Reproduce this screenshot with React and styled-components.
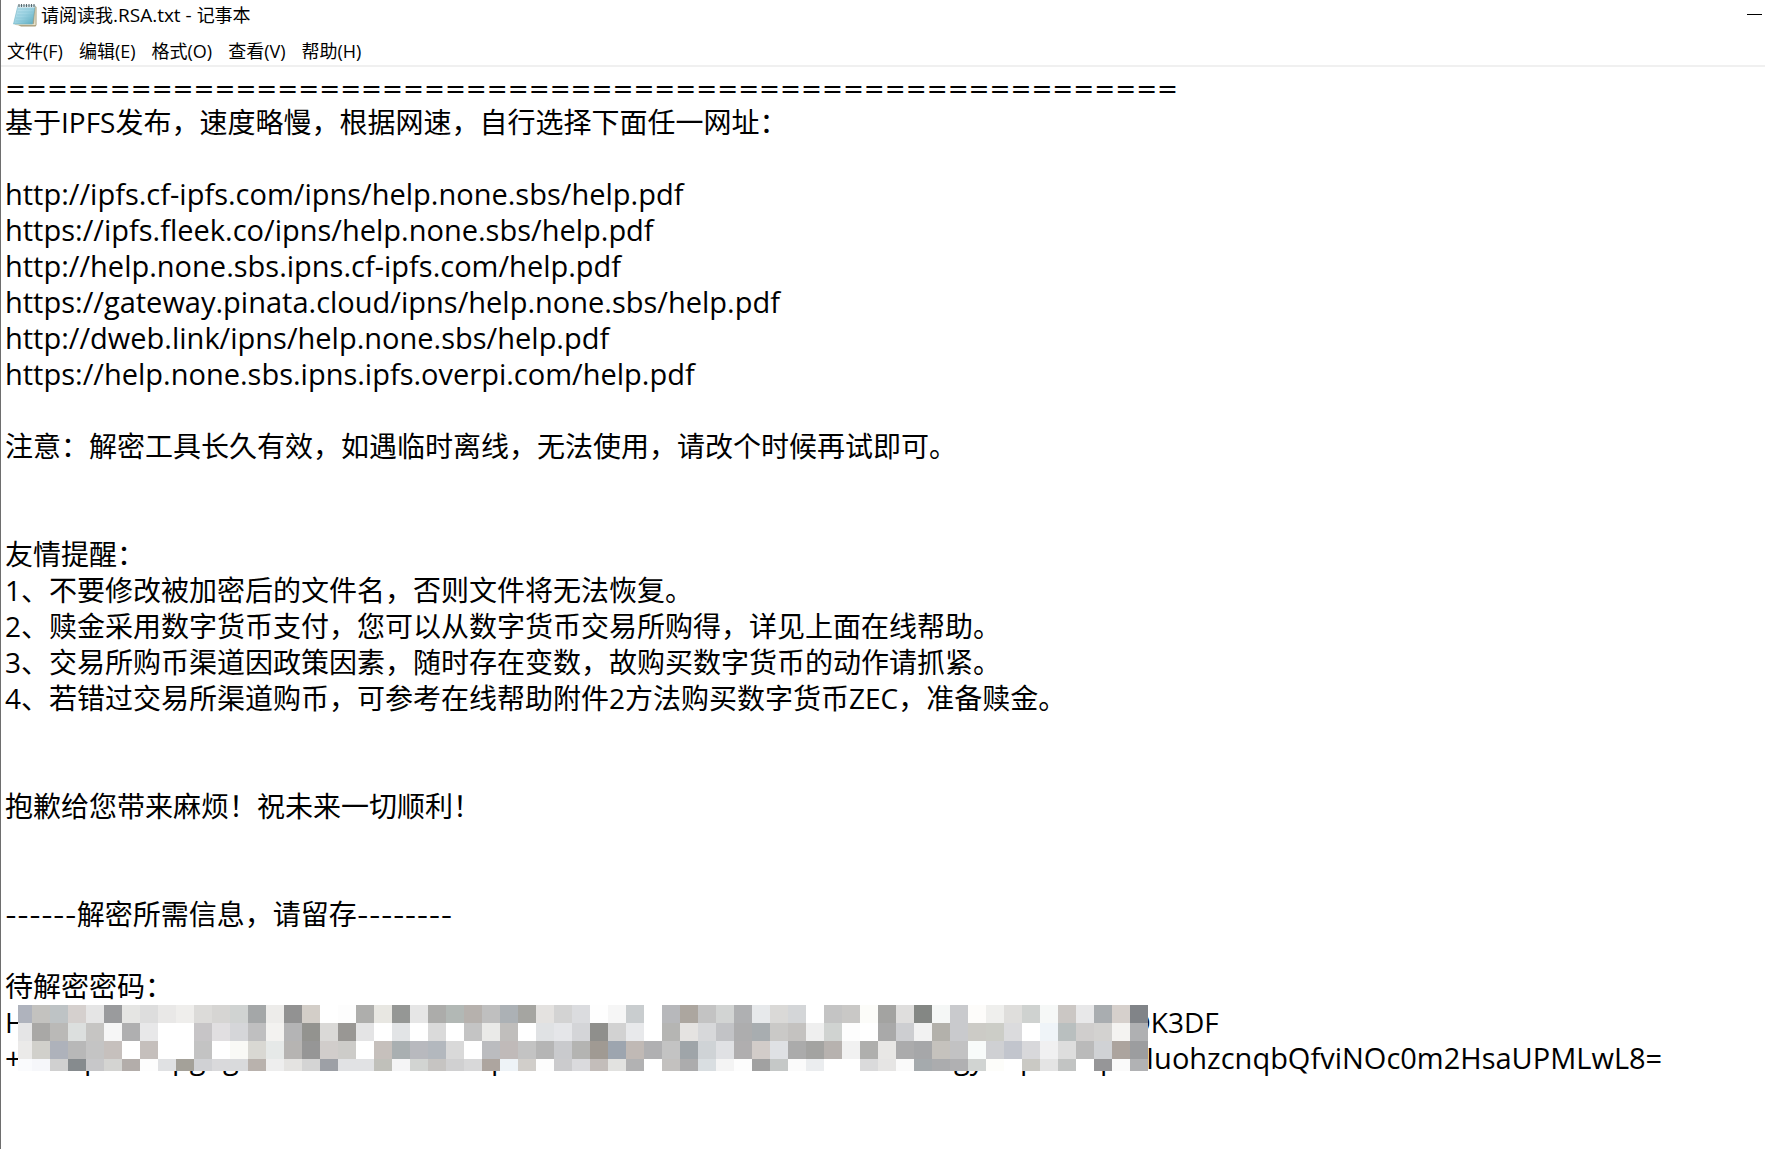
import styled, { createGlobalStyle } from 'styled-components'

const menus = ['文件(F)', '编辑(E)', '格式(O)', '查看(V)', '帮助(H)']

const links = [
  'http://ipfs.cf-ipfs.com/ipns/help.none.sbs/help.pdf',
  'https://ipfs.fleek.co/ipns/help.none.sbs/help.pdf',
  'http://help.none.sbs.ipns.cf-ipfs.com/help.pdf',
  'https://gateway.pinata.cloud/ipns/help.none.sbs/help.pdf',
  'http://dweb.link/ipns/help.none.sbs/help.pdf',
  'https://help.none.sbs.ipns.ipfs.overpi.com/help.pdf',
]

const reminders = [
  '1、不要修改被加密后的文件名，否则文件将无法恢复。',
  '2、赎金采用数字货币支付，您可以从数字货币交易所购得，详见上面在线帮助。',
  '3、交易所购币渠道因政策因素，随时存在变数，故购买数字货币的动作请抓紧。',
  '4、若错过交易所渠道购币，可参考在线帮助附件2方法购买数字货币ZEC，准备赎金。',
]

// one string per row of blocks, one colour per block
const mosaic = [
  'afb3bd c3c2bf bec3c5 d5d0ce e5e5e5 9a9b9d e5e5e3 dddddd e9e8e7 efeeec dcdbd9 d6d5d3 d0d3d2 a4a7a8 edecea 929292 d3cec8 ffffff fdfdfd aeaeac e8e7e2 959795 e6e6e6 acacaa b2b8b5 b6b1ad bfbfbf acb1b5 a5a5a1 e4e2e0 d3d3d3 dbdcdf fefefe f6f6f6 c9cdcf ffffff b7b8bb aca69f c3c3c3 d2d4d3 afb0b2 e7e9eb dad9d7 d4d6d8 ffffff c4c4c4 c9c8c6 fcfcf9 a3a3a1 dfdedd 848784 f5f7f6 c9cacd fdfcfa efefed dfdedc cfd2d0 f6f8f7 cbc7c4 e8e8e9 a9adb0 d6d0cc 818488',
  'e5e5e6 a9a8a6 bab9b7 dcdfde c6c5c3 f6f6f6 afafb0 e8e8e9 ffffff ffffff c7c5c7 e1dfe1 d5d6d9 bfbfc0 f3f2f0 b4b4b5 93938f dad9d7 999794 e4e4e5 ffffff e2e4e6 ffffff dadada ffffff c4c4c4 eaeae8 c0bebc ffffff e0e2e4 e5e6e9 d4d5d8 8f8f8c d2d2d2 e8e9eb ffffff b5b5b3 e5e3e1 d7d8da c2c3c6 adadae a8adb0 cac9c7 c4c2c0 efefef d0d3d1 fdfdfd ffffff a9a9a9 cdced1 f2f2f2 b3b1ab c9cacd cccbc6 cccdc7 dbdbdd ffffff eff4f8 b9bfbf d0cecd d3d2d0 f4f3f1 afb0b2',
  'ebeae9 d1d0cb aeb2bb b8b8b8 c4c4c4 c6c0bd ffffff c5bfbc ffffff ffffff c3c3c3 ffffff f9f9f6 d9d8d3 e6e9e8 b6b4b2 969696 d1cdcb cdccc9 ffffff c6c0bc a9afb1 b8b9be b3b8be d9d9d9 ffffff bbbcbf c0bab9 c3c3c3 b5b5b5 c9cacd b4b4b2 a09a93 9da5af c0b9b5 b0b0b2 c3c3c3 9fa5a9 cfd3d6 e0e1e4 b0aeaf d2ccc9 dfe1e4 ababab a3a3a1 b7b2af f1f1f1 afafad e8e7e5 ababac a6a7a9 c5c2bd c2c2c3 f8fbfa cfd0d3 c2c5cd d8d8db f0f0f1 dddddd bababa d0d2d5 aca49e 9c9d9f',
  'fafbfd f6f7fa d0d0d0 868b8e c7c7c9 d4d4d2 b3adaa fdfdfd e0e1e3 a4a199 d0d1d4 d9d9db d9dadc b9b2ad eeeeee e4e3e1 d4d4d4 9da0a6 e1e2e4 e1e2e4 c0c0ba f5f5f6 d2d4d2 c6c4c2 d0d0d1 d8d8d9 ada59f eef3f7 d1ceca fdfdfd cbcbcd dadadd c3bdba e2e2e0 b2b2b3 ffffff c3c1bf acacad d9dee1 f4f4f4 fdfdfd a1a1a1 c5c8c7 fbfbfb ebedef ffffff ffffff dadadb e6e5e4 fafafa a5aaad abacae b0b0b2 d1d4d2 fdfdfa ffffff cac9c4 e4e4e4 c2c4c3 ffffff 969698 fafafa b1b2b4',
].map((row) => row.split(' '))

function NotepadIcon() {
  return (
    <svg width="24" height="24" viewBox="0 0 24 24" aria-hidden="true">
      <defs>
        <linearGradient id="page" x1="0" y1="0" x2="1" y2="1">
          <stop offset="0" stopColor="#c9e9f2" />
          <stop offset="0.5" stopColor="#9dd3e2" />
          <stop offset="1" stopColor="#58a9bd" />
        </linearGradient>
      </defs>
      <path d="M5 22 L8 23.500 H22.500 L23.500 22 V4 L22 3 Z" fill="#a59a78" />
      <path d="M2 21 H21 L22.500 3 V22 H4 Z" fill="#f3efdc" stroke="#cfc7aa" strokeWidth="0.5" />
      <path d="M5 2.500 H22 L19.500 21 H0.500 Z" fill="url(#page)" stroke="#6fb2c4" strokeWidth="0.6" />
      <path d="M5 6 H20.500 M4.500 9 H20 M4 12 H19.800 M3 15 H19.400 M2.500 18 H19" stroke="#7fbfd0" strokeWidth="0.5" />
      <path d="M5 2.500 H22 L21.700 4.500 H4.600 Z" fill="#e3edf0" />
      <path d="M6 1 V4 M8.500 1 V4 M11 1 V4 M13.500 1 V4 M16 1 V4 M18.500 1 V4 M21 1 V4" stroke="#59676c" strokeWidth="1.100" />
    </svg>
  )
}

function MosaicBlocks() {
  return (
    <Mosaic width="1130" height="66" viewBox="0 0 1130 66" shapeRendering="crispEdges" aria-hidden="true">
      {mosaic.map((row, y) =>
        row.map((color, x) => (
          <rect key={`${x}-${y}`} x={x ? x * 18 - 4 : 0} y={y * 18} width={x ? 18 : 14} height="18" fill={`#${color}`} />
        ))
      )}
    </Mosaic>
  )
}

function App() {
  return (
    <>
      <GlobalStyle />
      <Window>
        <TitleBar>
          <NotepadIcon />
          <Title>
            请阅读我<Latin $size={19}>.RSA.txt - </Latin>记事本
          </Title>
          <Minimize type="button" aria-label="最小化" />
        </TitleBar>
        <MenuBar>
          {menus.map((menu) => (
            <MenuButton type="button" key={menu}>
              {menu}
            </MenuButton>
          ))}
        </MenuBar>
        <Document role="textbox" aria-multiline="true" aria-label="请阅读我.RSA.txt" contentEditable suppressContentEditableWarning spellCheck={false}>
          <Line>
            <Rule>{'='.repeat(56)}</Rule>
          </Line>
          <Line>基于IPFS发布，速度略慢，根据网速，自行选择下面任一网址：</Line>
          <Line />
          {links.map((link) => (
            <Line key={link}>
              <Latin $size={29}>{link}</Latin>
            </Line>
          ))}
          <Line />
          <Line>注意：解密工具长久有效，如遇临时离线，无法使用，请改个时候再试即可。</Line>
          <Line />
          <Line />
          <Line>友情提醒：</Line>
          {reminders.map((reminder) => (
            <Line key={reminder}>{reminder}</Line>
          ))}
          <Line />
          <Line />
          <Line>抱歉给您带来麻烦！祝未来一切顺利！</Line>
          <Line />
          <Line />
          <Line>
            <Dashes>------</Dashes>解密所需信息，请留存<Dashes>--------</Dashes>
          </Line>
          <Line />
          <Line>待解密密码：</Line>
          <Redacted>
            <KeyLine $size={28}>
              <Segment $width={1124}>H</Segment>
              <Segment>OK3DF</Segment>
            </KeyLine>
            <KeyLine $size={29}>
              <Segment $width={79}>+</Segment>
              <Segment $width={88}>p</Segment>
              <Segment $width={51}>pg</Segment>
              <Segment $width={268}>g</Segment>
              <Segment $width={463}>p</Segment>
              <Segment $width={66}>gy</Segment>
              <Segment $width={80}>p</Segment>
              <Segment $width={46}>p</Segment>
              <Segment>IuohzcnqbQfviNOc0m2HsaUPMLwL8=</Segment>
            </KeyLine>
            <MosaicBlocks />
          </Redacted>
        </Document>
      </Window>
    </>
  )
}

const GlobalStyle = createGlobalStyle`
  * {
    box-sizing: border-box;
  }

  body {
    margin: 0;
    background-color: #fff;
    color: #000;
    font-family: 'Open Sans', 'Noto Sans CJK SC', sans-serif;
  }
`

const Window = styled.div`
  display: flex;
  flex-direction: column;
  min-height: 100vh;
  border-left: 1px solid #6e6e6e;
  overflow: hidden;
`

const TitleBar = styled.header`
  display: flex;
  align-items: center;
  gap: 4px;
  height: 29px;
  padding: 0 3px 0 12px;
`

const Title = styled.h1`
  flex: 1;
  margin: 0;
  font-size: 18px;
  font-weight: 400;
  line-height: 28px;
  white-space: pre;
`

const Minimize = styled.button`
  width: 15px;
  height: 28px;
  padding: 0;
  border: none;
  background: linear-gradient(#000, #000) center / 15px 1px no-repeat;
`

const MenuBar = styled.nav`
  display: flex;
  align-items: flex-end;
  gap: 16px;
  height: 38px;
  padding-left: 6px;
  border-bottom: 2px solid #f0f0f0;
`

const MenuButton = styled.button`
  padding: 0;
  border: none;
  background: none;
  color: #000;
  font-family: inherit;
  font-size: 18px;
  line-height: 28px;
`

const Document = styled.main`
  flex: 1;
  padding: 1px 0 0 4px;
  font-size: 28px;
  line-height: 36px;
  outline: none;
`

const Line = styled.div`
  height: 36px;
  white-space: pre;
`

const Latin = styled.span`
  font-size: ${({ $size }) => $size}px;
`

const Rule = styled.span`
  font-family: 'DejaVu Sans', sans-serif;
  font-size: 25px;
`

const Dashes = styled.span`
  font-family: Inter, sans-serif;
  font-size: 26px;
`

const Redacted = styled.div`
  position: relative;
`

const KeyLine = styled(Line)`
  display: flex;
  font-size: ${({ $size }) => $size}px;
`

const Segment = styled.span`
  flex: none;
  width: ${({ $width }) => ($width ? `${$width}px` : 'auto')};
`

const Mosaic = styled.svg`
  position: absolute;
  top: 1px;
  left: 13px;
`

export default App
